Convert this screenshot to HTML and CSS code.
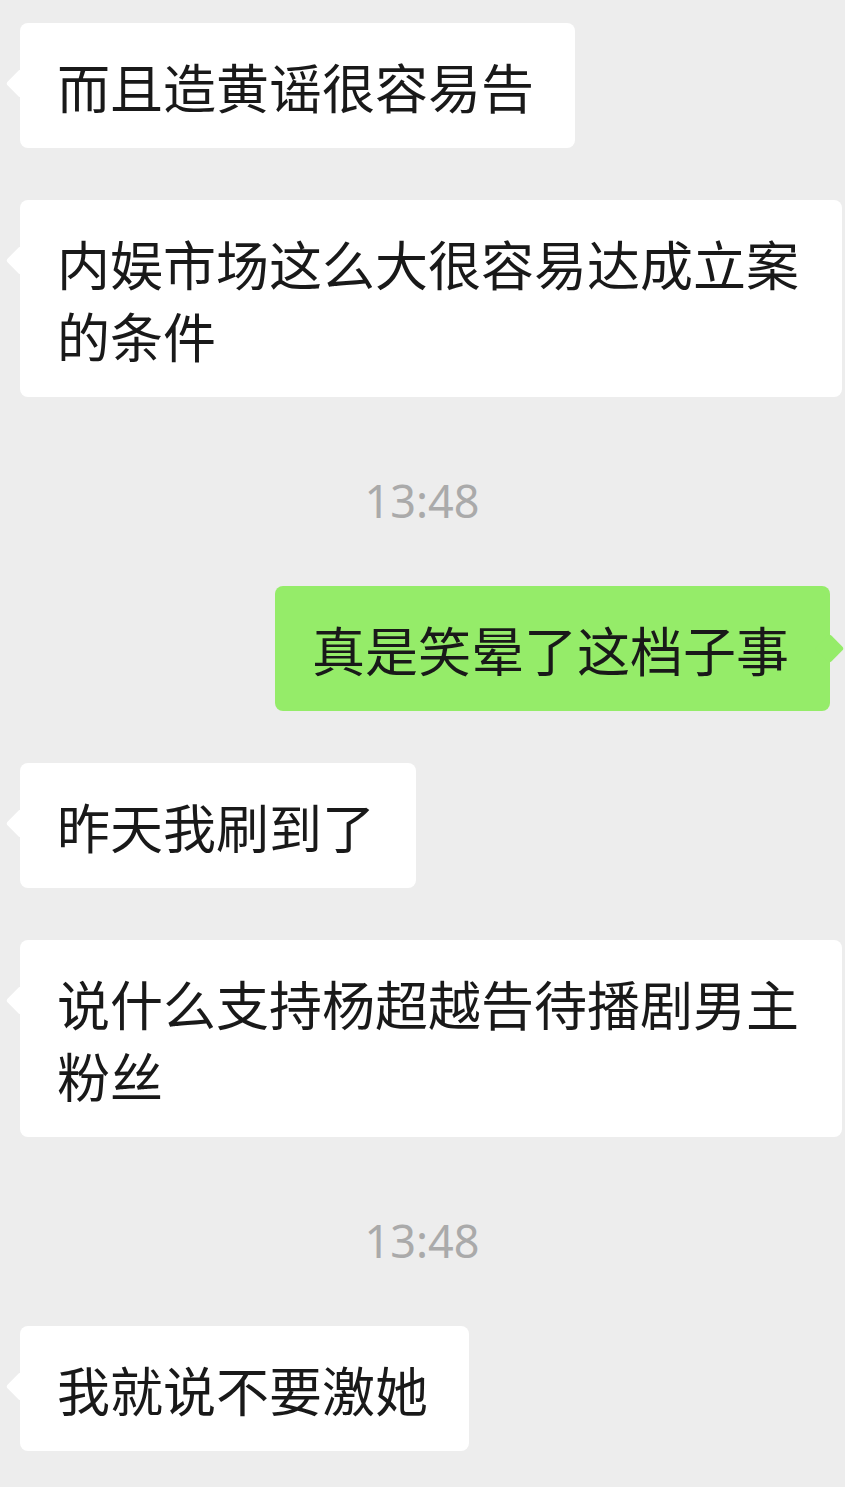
FILE: index.html
```html
<!DOCTYPE html>
<html lang="zh-CN">
  <head>
    <meta charset="UTF-8" />
    <meta name="viewport" content="width=device-width, initial-scale=1.0" />
    <title>聊天</title>
    <link rel="stylesheet" href="styles.css">
  </head>
  <body>
    <div class="chat">
      <div class="row left">
        <div class="bubble">而且造黄谣很容易告</div>
      </div>
      <div class="row left">
        <div class="bubble">内娱市场这么大很容易达成立案的条件</div>
      </div>
      <div class="time">13:48</div>
      <div class="row right">
        <div class="bubble mine">真是笑晕了这档子事</div>
      </div>
      <div class="row left">
        <div class="bubble">昨天我刷到了</div>
      </div>
      <div class="row left">
        <div class="bubble">说什么支持杨超越告待播剧男主粉丝</div>
      </div>
      <div class="time">13:48</div>
      <div class="row left">
        <div class="bubble">我就说不要激她</div>
      </div>
    </div>
  </body>
</html>
```

FILE: styles.css
```css
html,
body {
  margin: 0;
  padding: 0;
  background: #ededed;
}

body {
  font-family: "Noto Sans CJK SC", "Noto Sans", sans-serif;
  color: #191919;
}

.chat {
  display: flex;
  flex-direction: column;
  padding: 23px 3px 0 20px;
  min-height: 1487px;
  box-sizing: border-box;
}

.row {
  display: flex;
  margin-bottom: 52px;
}

.row.left {
  justify-content: flex-start;
}

.row.right {
  justify-content: flex-end;
  padding-right: 12px;
}

.bubble {
  position: relative;
  background: #ffffff;
  border-radius: 8px;
  font-size: 53px;
  line-height: 72px;
  padding: 27px 41px 26px 37px;
  max-width: 822px;
  box-sizing: border-box;
  word-break: break-all;
}

/* little pointer on the side of each bubble */
.bubble::before {
  content: "";
  position: absolute;
  top: 50px;
  left: -10px;
  width: 21px;
  height: 21px;
  background: inherit;
  border-radius: 3px;
  transform: rotate(45deg);
}

.bubble.mine {
  background: #95ec69;
}

.bubble.mine::before {
  left: auto;
  right: -10px;
  top: 52px;
}

.time {
  text-align: center;
  font-family: "Noto Sans", "Liberation Sans", sans-serif;
  font-size: 45px;
  line-height: 44px;
  color: #aaaaaa;
  margin: 30px 0 63px -18px;
}
```
